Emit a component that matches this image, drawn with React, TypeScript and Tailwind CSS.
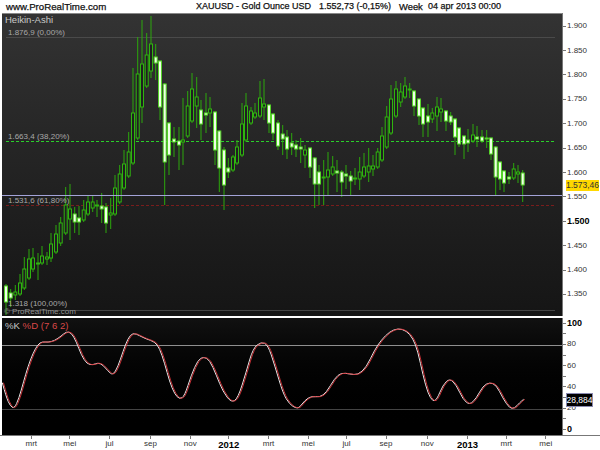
const font = "font-['Liberation_Sans',Arial,sans-serif]"

// x, body top, body bottom, wick top, wick bottom, white body
type Candle = [number, number, number, number, number, number]
const candles: Candle[] = [
  [6, 286, 302, 284, 315, 1], [10.7, 293, 298, 289, 307, 1], [15.3, 292, 295, 285, 300, 0], [20, 283, 294, 274, 296, 0],
  [24.3, 269, 288, 257, 290, 0], [29, 259, 278, 249, 280, 0], [33, 258, 269, 248, 272, 0], [38, 263, 263, 253, 280, 0],
  [42, 256, 263, 246, 265, 0], [47, 257, 259, 252, 265, 0], [51, 244, 258, 233, 262, 0], [56, 234, 252, 225, 254, 0],
  [60.7, 223, 243, 217, 246, 0], [65.7, 205, 233, 187, 235, 0], [70, 209, 219, 184, 240, 0], [74.7, 214, 222, 207, 233, 1],
  [79, 218, 222, 206, 235, 1], [83.7, 210, 220, 200, 222, 0], [88, 202, 214, 196, 216, 0], [92.7, 202, 208, 196, 212, 0],
  [97, 205, 205, 200, 217, 0], [101.7, 206, 209, 193, 223, 1], [106, 207, 223, 203, 233, 1], [110.7, 213, 215, 198, 229, 0],
  [115, 188, 214, 175, 216, 0], [119.7, 174, 202, 165, 204, 0], [124, 164, 188, 150, 190, 0], [128.7, 152, 176, 132, 178, 0],
  [133, 113, 163, 68, 165, 0], [137.7, 74, 138, 37, 140, 0], [142, 64, 107, 20, 123, 0], [146.7, 55, 86, 33, 88, 0],
  [151, 44, 71, 16, 78, 0], [155.7, 57, 63, 44, 80, 1], [160, 61, 107, 60, 120, 1], [164.7, 84, 162, 83, 205, 1],
  [169, 123, 155, 122, 175, 1], [174, 139, 142, 127, 157, 1], [179, 141, 145, 127, 170, 1], [183, 140, 142, 98, 165, 0],
  [187.7, 106, 136, 91, 138, 0], [192, 89, 121, 73, 123, 0], [196.7, 97, 106, 77, 128, 0], [201, 110, 124, 100, 140, 1],
  [206, 113, 115, 93, 133, 1], [210, 109, 113, 97, 127, 0], [215, 112, 150, 111, 165, 1], [219.3, 131, 168, 130, 192, 1],
  [224, 150, 185, 147, 210, 1], [228.3, 168, 172, 158, 178, 1], [233, 157, 170, 155, 172, 0], [237, 147, 163, 140, 165, 0],
  [242, 124, 155, 103, 157, 0], [246, 106, 140, 93, 142, 0], [251, 111, 123, 107, 125, 0], [255, 113, 117, 103, 119, 0],
  [260, 98, 116, 81, 118, 0], [264, 104, 107, 79, 120, 0], [269, 105, 123, 104, 133, 1], [273, 114, 133, 113, 140, 1],
  [278, 123, 146, 120, 150, 1], [282.7, 134, 139, 125, 155, 1], [287, 137, 149, 130, 159, 1], [291.7, 143, 147, 133, 155, 1],
  [296, 145, 149, 140, 157, 1], [300.7, 147, 149, 138, 163, 1], [305, 150, 155, 145, 168, 0], [310, 148, 167, 147, 178, 1],
  [314.7, 158, 184, 157, 208, 1], [319, 172, 184, 165, 205, 1], [323.7, 177, 178, 160, 205, 0], [328, 170, 177, 152, 195, 0],
  [332.7, 167, 174, 156, 176, 0], [337, 171, 173, 160, 192, 1], [341.7, 172, 182, 170, 197, 1], [346, 174, 176, 165, 189, 1],
  [350.7, 176, 181, 171, 195, 1], [355, 178, 179, 168, 185, 0], [359.7, 172, 179, 157, 190, 0], [364, 167, 176, 153, 178, 0],
  [368.7, 166, 172, 148, 182, 0], [373, 166, 169, 155, 176, 0], [377.7, 152, 167, 148, 169, 0], [382, 136, 160, 127, 162, 0],
  [386.7, 117, 147, 106, 149, 0], [391, 99, 133, 85, 135, 0], [396, 89, 116, 81, 118, 0], [400.7, 92, 102, 83, 107, 0],
  [405, 86, 97, 77, 99, 0], [409.7, 89, 90, 83, 98, 0], [414, 91, 106, 90, 116, 1], [419, 99, 116, 98, 125, 1],
  [423, 108, 124, 107, 137, 1], [428, 116, 122, 104, 137, 1], [432.3, 113, 119, 108, 123, 0], [437, 107, 116, 97, 131, 0],
  [441, 109, 112, 98, 122, 0], [446, 111, 121, 110, 131, 1], [450.7, 116, 122, 112, 125, 1], [455, 119, 137, 118, 155, 1],
  [459, 128, 144, 127, 147, 1], [464, 136, 144, 135, 159, 1], [468, 140, 143, 129, 152, 1], [473, 135, 141, 124, 143, 0],
  [477, 137, 139, 126, 147, 1], [482, 137, 141, 130, 143, 1], [486.7, 138, 139, 130, 148, 1], [491, 138, 154, 137, 160, 1],
  [495.7, 147, 177, 146, 195, 1], [500, 162, 179, 161, 190, 1], [504, 171, 183, 170, 192, 1], [509, 177, 179, 172, 184, 1],
  [513.7, 169, 178, 163, 180, 0], [518, 172, 174, 165, 183, 0], [522.7, 173, 185, 170, 202, 1],
]

const kRaw = [
  [8, 218], [20, 262], [32, 288], [44, 296], [58, 265], [72, 215], [85, 170], [100, 130], [115, 103], [128, 95], [145, 97], [165, 92],
  [185, 78], [200, 65], [215, 68], [230, 95], [245, 135], [262, 162], [280, 165], [295, 158], [310, 165], [325, 183], [340, 196], [355, 170],
  [370, 125], [385, 85], [400, 68], [420, 77], [440, 87], [465, 95], [480, 115], [495, 160], [510, 215], [525, 252], [540, 268], [555, 258],
  [575, 195], [595, 150], [612, 140], [630, 150], [650, 195], [670, 245], [695, 278], [715, 265], [740, 185], [760, 115], [785, 95], [805, 105],
  [825, 165], [850, 250], [870, 283], [890, 295], [900, 292], [915, 272], [935, 258], [960, 262], [980, 248], [1005, 205], [1025, 188], [1050, 192],
  [1075, 195], [1100, 172], [1125, 120], [1145, 90], [1170, 65], [1195, 55], [1220, 62], [1240, 85], [1255, 125], [1270, 195], [1285, 250], [1300, 275],
  [1312, 268], [1330, 225], [1350, 205], [1370, 225], [1390, 268], [1410, 285], [1430, 265], [1450, 228], [1470, 217], [1490, 225], [1510, 265], [1530, 295],
  [1545, 295], [1560, 278], [1572, 268],
]

function smoothPath(dx: number) {
  const pts = kRaw.map(([x, y]) => [x / 3 + dx, 310 + y / 3])
  let d = `M${pts[0][0]} ${pts[0][1]}`
  for (let i = 1; i < pts.length - 1; i++) {
    const mx = (pts[i][0] + pts[i + 1][0]) / 2
    const my = (pts[i][1] + pts[i + 1][1]) / 2
    d += ` Q${pts[i][0]} ${pts[i][1]} ${mx} ${my}`
  }
  const last = pts[pts.length - 1]
  return d + ` L${last[0]} ${last[1]}`
}

const priceTicks = [
  { label: '1.900' }, { label: '1.850' }, { label: '1.800' }, { label: '1.750' },
  { label: '1.700' }, { label: '1.650' }, { label: '1.600' }, { label: '1.550' },
  { label: '1.500', bold: true }, { label: '1.450' }, { label: '1.400' }, { label: '1.350' },
]
const oscTicks = [
  { label: '100', bold: true }, { label: '' }, { label: '80' }, { label: '' }, { label: '60' }, { label: '' },
  { label: '40' }, { label: '' }, { label: '20' }, { label: '' }, { label: '0', bold: true },
]
const months = [
  { x: 32, label: 'mrt' }, { x: 69, label: 'mei' }, { x: 109, label: 'jul' }, { x: 151, label: 'sep' }, { x: 191, label: 'nov' },
  { x: 228, label: '2012', bold: true }, { x: 268, label: 'mrt' }, { x: 310, label: 'mei' }, { x: 345, label: 'jul' }, { x: 386, label: 'sep' },
  { x: 427, label: 'nov' }, { x: 469, label: '2013', bold: true }, { x: 505, label: 'mrt' }, { x: 546, label: 'mei' },
]

function AxisRow({ label, bold, rowClass }: { label: string; bold?: boolean; rowClass: string }) {
  return (
    <div className={`flex items-center gap-px leading-none ${rowClass}`}>
      <span className="h-px w-[3px] bg-[#777]" />
      <span className={bold ? 'text-[9px] font-bold text-black' : 'text-[8px] text-[#333]'}>{label}</span>
    </div>
  )
}

function PriceChart() {
  return (
    <svg className="absolute inset-0 h-full w-full" viewBox="2 14 560 302">
      <line x1="6" x2="555" y1="37.5" y2="37.5" stroke="#4a4a4a" />
      <line x1="6" x2="555" y1="141.5" y2="141.5" stroke="#2ad02a" strokeDasharray="3 2" />
      <line x1="6" x2="555" y1="205.5" y2="205.5" stroke="#7a1c1c" strokeDasharray="3 2" />
      <line x1="6" x2="555" y1="310.5" y2="310.5" stroke="#444" />
      {candles.map(([x, top, bottom, wt, wb, white]) => (
        <g key={x}>
          <line x1={x} x2={x} y1={wt} y2={wb} stroke="#2ca80c" />
          <rect
            x={x - 1.5}
            y={top}
            width={3}
            height={Math.max(bottom - top, 1)}
            fill={white ? '#eeffe6' : '#1f1f1f'}
            stroke={white ? '#56d42a' : '#2fb50f'}
          />
        </g>
      ))}
      <line x1="2" x2="562" y1="195.5" y2="195.5" stroke="#a3a3d8" />
    </svg>
  )
}

function OscChart() {
  return (
    <svg className="absolute inset-0 h-full w-full" viewBox="2 318 560 117">
      <line x1="2" x2="562" y1="345.5" y2="345.5" stroke="#8f8f8f" />
      <line x1="2" x2="562" y1="409.5" y2="409.5" stroke="#444" />
      <path d={smoothPath(-0.4)} fill="none" stroke="#e6e6e6" strokeWidth="1" />
      <path d={smoothPath(0.8)} fill="none" stroke="#d8343a" strokeWidth="0.9" />
    </svg>
  )
}

export default function App() {
  return (
    <div className={`flex h-[450px] w-[600px] flex-col overflow-hidden bg-white ${font}`}>
      <header className="flex h-[13px] items-center whitespace-pre pl-[6px] text-[9px] leading-none text-[#111] [-webkit-text-stroke:0.25px_#111]">
        <span className="w-[190px] text-[9.7px]">www.ProRealTime.com</span>
        <span className="w-[123px]">XAUUSD - Gold Ounce USD</span>
        <span className="w-[80px]">1.552,73 (-0,15%)</span>
        <span className="w-[29px] text-[9.4px]">Week</span>
        <span>04 apr 2013 00:00</span>
      </header>

      <div className="flex h-[303px] pl-[2px]">
        <div className="relative w-[560px] border-t border-t-[#888] bg-gradient-to-b from-[#333333] to-[#151515] text-[8px] leading-none text-[#a8a8a8]">
          <PriceChart />
          <span className="absolute left-[3px] top-[1px] text-[9.5px] text-[#c8c8c8]">Heikin-Ashi</span>
          <span className="absolute left-[6px] top-[15px]">1.876,9 (0,00%)</span>
          <span className="absolute left-[6px] top-[119px]">1.663,4 (38,20%)</span>
          <span className="absolute left-[6px] top-[183px]">1.531,6 (61,80%)</span>
          <span className="absolute left-[6px] top-[286px]">1.318 (100,00%)</span>
          <span className="absolute left-[2px] top-[294px] text-[#8f8f8f]">© ProRealTime.com</span>
        </div>
        <div className="relative flex flex-1 flex-col border-l border-l-[#777] pt-px">
          {priceTicks.map((t) => (
            <AxisRow key={t.label} label={t.label} bold={t.bold} rowClass="h-[24.4px]" />
          ))}
          <span className="absolute left-[3px] top-[167px] flex h-[11px] w-[33px] items-center justify-center bg-[#ffd800] text-[8.5px] leading-none text-[#333]">
            1.573,46
          </span>
        </div>
      </div>

      <div className="mt-[2px] flex h-[117px] pl-[2px]">
        <div className="relative w-[560px] bg-gradient-to-b from-[#111111] to-[#000000]">
          <OscChart />
          <span className="absolute left-[3px] top-[3px] text-[9.6px] leading-none text-[#c8c8c8]">
            %K <span className="text-[#d84848]">%D (7 6 2)</span>
          </span>
        </div>
        <div className="relative flex flex-1 flex-col border-l border-l-[#777]">
          {oscTicks.map((t, i) => (
            <AxisRow key={i} label={t.label} bold={t.bold} rowClass="h-[10.6px] shrink-0" />
          ))}
          <span className="absolute left-[3px] top-[75px] flex h-[14px] w-[27px] items-center justify-center border border-[#8a8ab0] bg-black text-[8.5px] leading-none text-white">
            28,884
          </span>
        </div>
      </div>

      <div className="flex flex-1 border-t border-t-[#777] text-[8px] leading-none text-[#333]">
        {months.map((m, i) => {
          // each cell runs from midpoint to midpoint, so tick and label sit centred on the month's x
          const start = i === 0 ? 12 : (months[i - 1].x + m.x) / 2
          const end = i === months.length - 1 ? m.x + 20 : (m.x + months[i + 1].x) / 2
          return (
            <div
              key={m.x}
              className="flex shrink-0 flex-col items-center gap-px first:ml-[12px]"
              style={{ width: end - start }}
            >
              <span className="h-[3px] w-px bg-[#777]" />
              <span className={m.bold ? 'text-[9.5px] font-bold text-black' : ''}>{m.label}</span>
            </div>
          )
        })}
      </div>
    </div>
  )
}
